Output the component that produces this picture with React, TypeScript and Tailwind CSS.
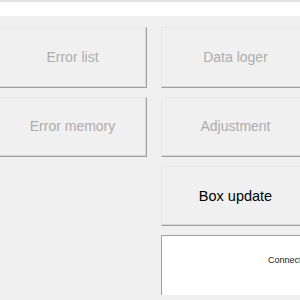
export default function App() {
  const btn =
    "flex items-center justify-center border-t border-l border-[#e8e8e8] border-r border-b border-r-[#a0a0a0] border-b-[#a0a0a0] bg-[#f0f0f0] shadow-[inset_-1px_-1px_0_#d8d8d8]";
  return (
    <div
      className="relative h-[300px] w-[300px] overflow-hidden bg-[#f0f0f0]"
      style={{ fontFamily: '"Liberation Sans", Arial, sans-serif' }}
    >
      <div className="h-[2px] bg-[#e3e3e3]" />
      <div className="h-[14px] bg-white" />
      <div className="ml-[-2px] mt-[11px] grid w-[312px] grid-cols-[149px_149px] grid-rows-[61px_60px_60px] gap-x-[14px] gap-y-[9px]">
        <div className={`${btn} text-[14px] text-[#adadad]`}>Error list</div>
        <div className={`${btn} text-[14px] text-[#adadad]`}>Data loger</div>
        <div className={`${btn} pb-[1px] text-[14px] text-[#adadad]`}>Error memory</div>
        <div className={`${btn} pb-[1px] text-[14px] text-[#adadad]`}>Adjustment</div>
        <div />
        <div className={`${btn} pt-[1px] text-[14.5px] text-black`}>Box update</div>
      </div>
      <div className="ml-[161px] mt-[9px] flex h-[60px] w-[200px] items-center border-t border-l border-t-[#a0a0a0] border-l-[#a0a0a0] bg-white pb-[10px] pl-[106px] text-[9px] text-[#222]">
        Connect
      </div>
    </div>
  );
}
